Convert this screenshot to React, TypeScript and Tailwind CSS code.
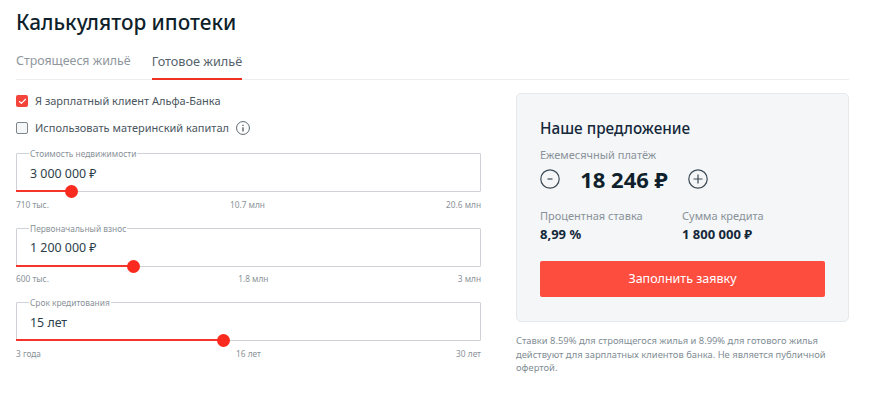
import React from 'react';
import { Check } from 'lucide-react';

interface SliderFieldProps {
  label: string;
  value: string;
  percent: number;
  marks: string[];
}

const SliderField: React.FC<SliderFieldProps> = ({ label, value, percent, marks }) => {
  return (
    <div className="h-[74.5px]">
      <div className="relative h-[39px] border border-[#cfd2d6] rounded-[1px] pl-[13px] pt-[9.5px] text-[12.4px] leading-[19px] text-[#2c3e4a]">
        <span className="absolute left-[12px] -top-[7px] bg-white px-[1px] text-[8.4px] leading-[13px] text-[#8a9299]">{label}</span>
        {value}
        <div className="absolute -left-px -bottom-px h-[2px] bg-[#f5352b]" style={{ width: `${percent}%` }} />
        <div
          className="absolute -bottom-[7px] w-[13px] h-[13px] -ml-[7px] rounded-full bg-[#fb2a1e]"
          style={{ left: `${percent}%` }}
        />
      </div>
      <div className="flex justify-between mt-[6.5px] text-[8.3px] leading-[12px] text-[#8a9299]">
        {marks.map((m) => (
          <span key={m}>{m}</span>
        ))}
      </div>
    </div>
  );
};

const RoundIcon: React.FC<{ sign: string; size: number }> = ({ sign, size }) => (
  <svg width={size} height={size} viewBox="0 0 20 20" fill="none" stroke="#3c4a54" strokeWidth="1.2">
    <circle cx="10" cy="10" r="9.2" />
    {sign === '-' && <path d="M7.5 10h5" />}
    {sign === '+' && <path d="M5.5 10h9M10 5.5v9" />}
    {sign === 'i' && <path d="M10 9v6M10 5.2v1.8" strokeWidth="1.7" />}
  </svg>
);

export default function App() {
  return (
    <div className="w-[870px] h-[405px] overflow-hidden bg-white pl-4 pr-[21px] pt-[8px] font-['Noto_Sans',sans-serif]">
      <h1 className="text-[20.8px] leading-[28px] font-medium text-[#0f1f2b]">Калькулятор ипотеки</h1>

      {/* Tabs */}
      <div className="flex gap-[21px] mt-[11px] h-[33px] border-b border-[#eceef0] text-[12.4px] leading-[18px]">
        <div className="pt-[5px] text-[#8f979d]">Строящееся жильё</div>
        <div className="relative pt-[5px] text-[12.7px] text-[#55626b]">
          Готовое жильё
          <div className="absolute left-0 right-0 -bottom-px h-[2px] bg-[#ef3124]" />
        </div>
      </div>

      <div className="flex justify-between mt-[13px]">
        {/* Form */}
        <div className="w-[465px]">
          <div className="flex items-center gap-[7px] h-[18px] -mt-px text-[11px] text-[#4a5660]">
            <div className="w-[12px] h-[12px] rounded-[2px] bg-[#f5453b] flex items-center justify-center">
              <Check size={9} strokeWidth={3} className="text-white" />
            </div>
            Я зарплатный клиент Альфа-Банка
          </div>
          <div className="flex items-center gap-[7px] h-[18px] mt-[9px] text-[11px] text-[#4a5660]">
            <div className="w-[12px] h-[12px] rounded-[2px] border border-[#7d868d] bg-[#f5f6f8]" />
            Использовать материнский капитал
            <RoundIcon sign="i" size={14} />
          </div>

          <div className="mt-[16px]">
            <SliderField label="Стоимость недвижимости" value="3 000 000 ₽" percent={11.8} marks={['710 тыс.', '10.7 млн', '20.6 млн']} />
            <SliderField label="Первоначальный взнос" value="1 200 000 ₽" percent={25.2} marks={['600 тыс.', '1.8 млн', '3 млн']} />
            <SliderField label="Срок кредитования" value="15 лет" percent={44.7} marks={['3 года', '16 лет', '30 лет']} />
          </div>
        </div>

        {/* Offer */}
        <div className="w-[333px]">
          <div className="h-[229px] rounded-[5px] border border-[#e6e9ec] bg-[#f4f6f8] px-[23px] pt-[23px]">
            <h2 className="text-[15.3px] leading-[22px] font-medium text-[#14283a]">Наше предложение</h2>
            <div className="mt-[8px] text-[11px] leading-[16px] text-[#8a9299]">Ежемесячный платёж</div>
            <div className="flex items-center mt-[3px] h-[26px]">
              <RoundIcon sign="-" size={20} />
              <div className="w-[128px] text-center text-[22px] leading-[26px] font-bold text-[#0f1f2b]">18 246 ₽</div>
              <RoundIcon sign="+" size={20} />
            </div>
            <div className="flex mt-[16px]">
              <div className="w-[142px]">
                <div className="text-[11px] leading-[16px] text-[#8a9299]">Процентная ставка</div>
                <div className="text-[13px] leading-[20px] font-bold text-[#14283a]">8,99 %</div>
              </div>
              <div>
                <div className="text-[11px] leading-[16px] text-[#8a9299]">Сумма кредита</div>
                <div className="text-[13px] leading-[20px] font-bold text-[#14283a]">1 800 000 ₽</div>
              </div>
            </div>
            <button className="mt-[17px] w-full h-[36px] rounded-[2px] bg-[#fd4d3f] text-[12.5px] text-white">Заполнить заявку</button>
          </div>
          <p className="mt-[12px] text-[9.4px] leading-[13.5px] text-[#7f8d95]">
            Ставки 8.59% для строящегося жилья и 8.99% для готового жилья действуют для зарплатных клиентов банка. Не является публичной офертой.
          </p>
        </div>
      </div>
    </div>
  );
}
